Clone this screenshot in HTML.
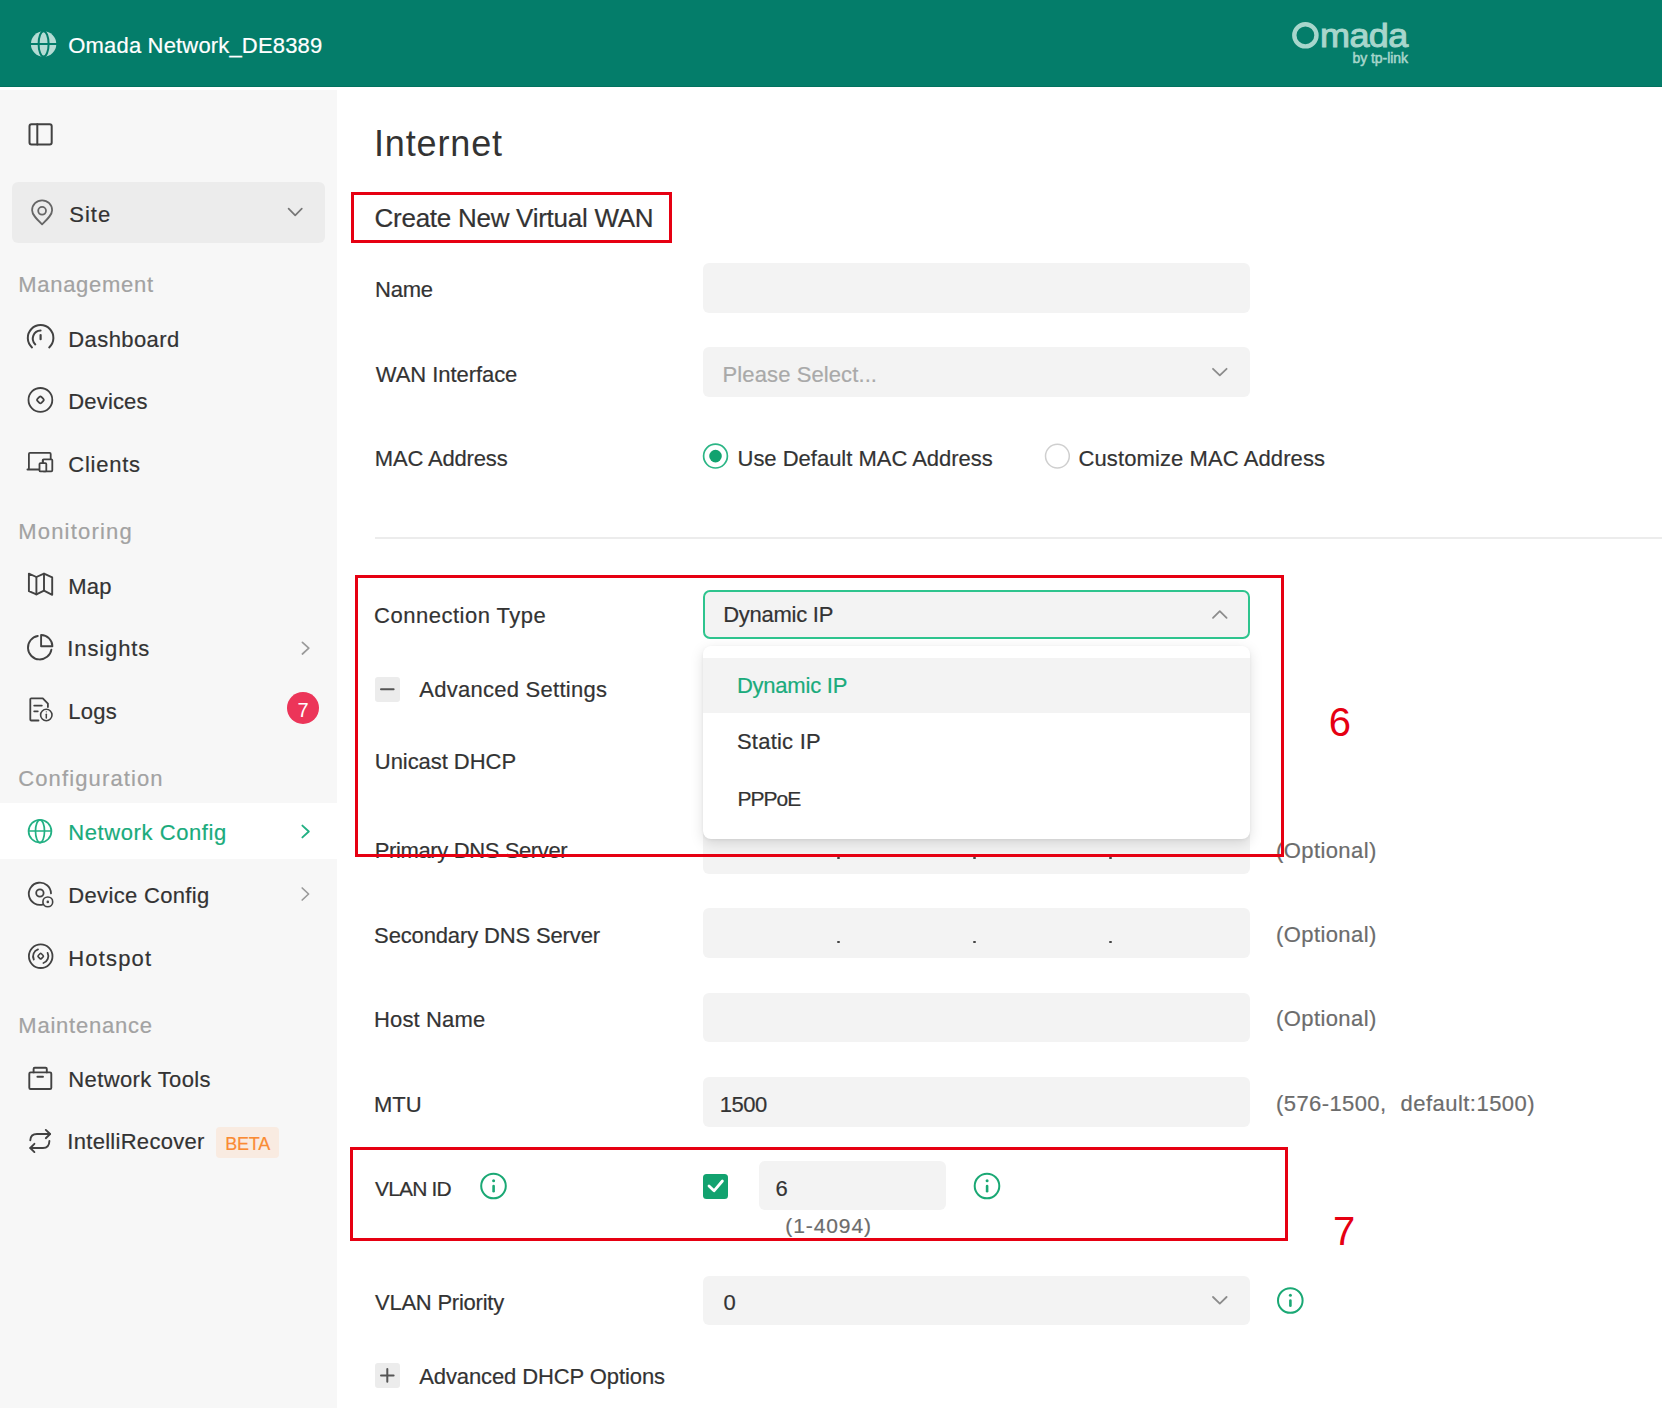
<!DOCTYPE html>
<html><head><meta charset="utf-8">
<style>
*{margin:0;padding:0;box-sizing:border-box}
html,body{width:1662px;height:1408px;overflow:hidden;background:#fff;font-family:"Liberation Sans",sans-serif}
.t{position:absolute;white-space:nowrap;line-height:1;-webkit-text-stroke:0.2px currentColor}
.b{position:absolute}
.ov{position:absolute;left:0;top:0;overflow:visible}
</style></head><body>


<div class="b" style="left:0;top:0;width:1662px;height:87px;background:#047d6a;border-bottom:1.6px solid #02725f"></div>
<div class="b" style="left:0;top:90px;width:337px;height:1318px;background:#f7f7f7"></div>
<div class="b" style="left:12px;top:181.5px;width:313px;height:61.5px;background:#ececec;border-radius:6px"></div>
<div class="b" style="left:287px;top:692px;width:31.8px;height:31.8px;border-radius:50%;background:#ec3559"></div>
<div class="b" style="left:0;top:803px;width:337px;height:56px;background:#fff"></div>
<div class="b" style="left:215.8px;top:1126.8px;width:63.5px;height:31.3px;background:#f9ebe1;border-radius:4px"></div>
<div class="b" style="left:703px;top:263px;width:546.5px;height:49.5px;background:#f3f3f3;border-radius:6px"></div>
<div class="b" style="left:703px;top:347px;width:546.5px;height:49.5px;background:#f3f3f3;border-radius:6px"></div>
<div class="b" style="left:375px;top:537px;width:1287px;height:2px;background:#ececec"></div>
<div class="b" style="left:703px;top:589.5px;width:546.5px;height:49.5px;background:#f3f3f3;border-radius:7px;border:2.2px solid #2ec48e"></div>
<div class="b" style="left:375px;top:677px;width:25px;height:24.5px;background:#ececec;border-radius:3px"></div>
<div class="b" style="left:703px;top:824px;width:546.5px;height:49.5px;background:#f3f3f3;border-radius:6px"></div>
<div class="b" style="left:703px;top:908.4px;width:546.5px;height:49.5px;background:#f3f3f3;border-radius:6px"></div>
<div class="b" style="left:703px;top:992.6px;width:546.5px;height:49.5px;background:#f3f3f3;border-radius:6px"></div>
<div class="b" style="left:703px;top:1077.2px;width:546.5px;height:49.5px;background:#f3f3f3;border-radius:6px"></div>
<div class="b" style="left:759.3px;top:1160.8px;width:187px;height:49.5px;background:#f3f3f3;border-radius:6px"></div>
<div class="b" style="left:703px;top:1275.5px;width:546.5px;height:49.5px;background:#f3f3f3;border-radius:6px"></div>
<div class="b" style="left:375px;top:1363.4px;width:25px;height:24.5px;background:#ececec;border-radius:3px"></div>
<div class="b" style="left:702.7px;top:1173.6px;width:25.3px;height:25.2px;background:#12a26f;border-radius:3.5px"></div>

<div class="b" style="left:837px;top:940.5px;width:2.5px;height:2.5px;background:#444;border-radius:50%"></div><div class="b" style="left:973px;top:940.5px;width:2.5px;height:2.5px;background:#444;border-radius:50%"></div><div class="b" style="left:1109px;top:940.5px;width:2.5px;height:2.5px;background:#444;border-radius:50%"></div><div class="b" style="left:837px;top:856.5px;width:2.5px;height:2.5px;background:#444;border-radius:50%"></div><div class="b" style="left:973px;top:856.5px;width:2.5px;height:2.5px;background:#444;border-radius:50%"></div><div class="b" style="left:1109px;top:856.5px;width:2.5px;height:2.5px;background:#444;border-radius:50%"></div>
<div class="t" style="left:68.3px;top:35.3px;font-size:22px;letter-spacing:0.17px;color:#fff">Omada Network_DE8389</div>
<div class="t" style="left:69.2px;top:203.9px;font-size:22px;letter-spacing:1.04px;color:#333333">Site</div>
<div class="t" style="left:18.2px;top:274.4px;font-size:22px;letter-spacing:0.72px;color:#a2a2a2">Management</div>
<div class="t" style="left:68.3px;top:329.0px;font-size:22px;letter-spacing:0.41px;color:#333333">Dashboard</div>
<div class="t" style="left:68.3px;top:391.3px;font-size:22px;letter-spacing:0.16px;color:#333333">Devices</div>
<div class="t" style="left:68.3px;top:454.0px;font-size:22px;letter-spacing:0.74px;color:#333333">Clients</div>
<div class="t" style="left:18.2px;top:521.0px;font-size:22px;letter-spacing:1.20px;color:#a2a2a2">Monitoring</div>
<div class="t" style="left:68.3px;top:576.1px;font-size:22px;letter-spacing:0.22px;color:#333333">Map</div>
<div class="t" style="left:67.3px;top:638.4px;font-size:22px;letter-spacing:0.88px;color:#333333">Insights</div>
<div class="t" style="left:68.3px;top:700.8px;font-size:22px;letter-spacing:0.26px;color:#333333">Logs</div>
<div class="t" style="left:18.2px;top:768.0px;font-size:22px;letter-spacing:1.13px;color:#a2a2a2">Configuration</div>
<div class="t" style="left:68.3px;top:822.4px;font-size:22px;letter-spacing:0.58px;color:#1aab7c">Network Config</div>
<div class="t" style="left:68.3px;top:885.2px;font-size:22px;letter-spacing:0.33px;color:#333333">Device Config</div>
<div class="t" style="left:68.3px;top:947.7px;font-size:22px;letter-spacing:1.17px;color:#333333">Hotspot</div>
<div class="t" style="left:18.3px;top:1015.2px;font-size:22px;letter-spacing:0.78px;color:#a2a2a2">Maintenance</div>
<div class="t" style="left:68.3px;top:1069.3px;font-size:22px;letter-spacing:0.38px;color:#333333">Network Tools</div>
<div class="t" style="left:67.3px;top:1130.6px;font-size:22px;letter-spacing:0.29px;color:#333333">IntelliRecover</div>
<div class="t" style="left:225.2px;top:1134.8px;font-size:18px;letter-spacing:-0.19px;color:#fa8b34">BETA</div>
<div class="t" style="left:297.5px;top:700.1px;font-size:20px;letter-spacing:0.00px;color:#fff;-webkit-text-stroke:0">7</div>
<div class="t" style="left:374.0px;top:126.4px;font-size:36px;letter-spacing:0.85px;color:#333333;-webkit-text-stroke:0">Internet</div>
<div class="t" style="left:374.6px;top:204.6px;font-size:26px;letter-spacing:-0.27px;color:#333333">Create New Virtual WAN</div>
<div class="t" style="left:375.0px;top:278.9px;font-size:22px;letter-spacing:-0.22px;color:#333333">Name</div>
<div class="t" style="left:375.8px;top:363.6px;font-size:22px;letter-spacing:-0.06px;color:#333333">WAN Interface</div>
<div class="t" style="left:722.6px;top:363.6px;font-size:22px;letter-spacing:0.10px;color:#a9a9a9">Please Select...</div>
<div class="t" style="left:374.8px;top:447.6px;font-size:22px;letter-spacing:-0.16px;color:#333333">MAC Address</div>
<div class="t" style="left:737.5px;top:447.6px;font-size:22px;letter-spacing:-0.01px;color:#333333">Use Default MAC Address</div>
<div class="t" style="left:1078.5px;top:447.6px;font-size:22px;letter-spacing:0.10px;color:#333333">Customize MAC Address</div>
<div class="t" style="left:374.1px;top:604.8px;font-size:22px;letter-spacing:0.50px;color:#333333">Connection Type</div>
<div class="t" style="left:723.2px;top:603.9px;font-size:22px;letter-spacing:-0.26px;color:#333333">Dynamic IP</div>
<div class="t" style="left:419.2px;top:679.2px;font-size:22px;letter-spacing:0.27px;color:#333333">Advanced Settings</div>
<div class="t" style="left:374.8px;top:751.0px;font-size:22px;letter-spacing:-0.05px;color:#333333">Unicast DHCP</div>
<div class="t" style="left:374.8px;top:839.6px;font-size:22px;letter-spacing:-0.38px;color:#333333">Primary DNS Server</div>
<div class="t" style="left:1276.0px;top:839.7px;font-size:22px;letter-spacing:0.41px;color:#6c6c6c">(Optional)</div>
<div class="t" style="left:374.1px;top:924.8px;font-size:22px;letter-spacing:-0.14px;color:#333333">Secondary DNS Server</div>
<div class="t" style="left:1276.0px;top:923.9px;font-size:22px;letter-spacing:0.41px;color:#6c6c6c">(Optional)</div>
<div class="t" style="left:374.0px;top:1008.8px;font-size:22px;letter-spacing:0.14px;color:#333333">Host Name</div>
<div class="t" style="left:1276.0px;top:1008.0px;font-size:22px;letter-spacing:0.41px;color:#6c6c6c">(Optional)</div>
<div class="t" style="left:374.0px;top:1094.1px;font-size:22px;letter-spacing:0.02px;color:#333333">MTU</div>
<div class="t" style="left:719.8px;top:1094.1px;font-size:22px;letter-spacing:-0.50px;color:#333333">1500</div>
<div class="t" style="left:1276.0px;top:1093.3px;font-size:22px;letter-spacing:0.41px;color:#6c6c6c">(576-1500,</div>
<div class="t" style="left:1400.6px;top:1093.3px;font-size:22px;letter-spacing:0.46px;color:#6c6c6c">default:1500)</div>
<div class="t" style="left:375.0px;top:1177.6px;font-size:21px;letter-spacing:-0.82px;color:#333333">VLAN ID</div>
<div class="t" style="left:775.6px;top:1177.7px;font-size:22px;letter-spacing:0.00px;color:#333333">6</div>
<div class="t" style="left:785.3px;top:1215.0px;font-size:21px;letter-spacing:0.90px;color:#6c6c6c">(1-4094)</div>
<div class="t" style="left:375.0px;top:1291.7px;font-size:22px;letter-spacing:-0.24px;color:#333333">VLAN Priority</div>
<div class="t" style="left:723.6px;top:1291.7px;font-size:22px;letter-spacing:0.00px;color:#333333">0</div>
<div class="t" style="left:419.2px;top:1366.3px;font-size:22px;letter-spacing:-0.10px;color:#333333">Advanced DHCP Options</div>
<svg class="ov" width="1662" height="1408" viewBox="0 0 1662 1408" >
<g fill="none" stroke-linecap="round" stroke-linejoin="round">
 <!-- header globe -->
 <circle cx="43.6" cy="43.9" r="12.7" fill="#b4dcd4" stroke="none"/>
 <ellipse cx="43.6" cy="43.9" rx="5" ry="12.7" stroke="#037d6a" stroke-width="2"/>
 <line x1="30.5" y1="43.9" x2="56.7" y2="43.9" stroke="#037d6a" stroke-width="2"/>
 <!-- omada O -->
 <circle cx="1305.4" cy="35.3" r="11.1" stroke="#a8d6cc" stroke-width="4.4"/>
 <!-- collapse -->
 <rect x="29.5" y="124.2" width="22.2" height="20.2" rx="2" stroke="#424242" stroke-width="2"/>
 <line x1="37.3" y1="124.2" x2="37.3" y2="144.4" stroke="#424242" stroke-width="2"/>
 <!-- site pin -->
 <path d="M42.1 224.3 C36 218.5 32.1 214.6 32.1 210.3 A10 10 0 0 1 52.1 210.3 C52.1 214.6 48.2 218.5 42.1 224.3 Z" stroke="#666" stroke-width="1.8"/>
 <circle cx="42.1" cy="210.8" r="3.9" stroke="#666" stroke-width="1.8"/>
 <polyline points="288.6,208.6 295.2,215.3 301.8,208.6" stroke="#777" stroke-width="1.7"/>
 <!-- dashboard -->
 <path d="M32 347.4 A12.8 12.8 0 1 1 49.2 347.4" stroke="#424242" stroke-width="2"/>
 <path d="M35.3 344.4 A8 8 0 0 1 40.6 330.6" stroke="#424242" stroke-width="2"/>
 <line x1="40.6" y1="335" x2="40.6" y2="339.2" stroke="#424242" stroke-width="2.2"/>
 <!-- devices -->
 <circle cx="40.4" cy="399.9" r="11.9" stroke="#424242" stroke-width="1.8"/>
 <rect x="37.6" y="397.1" width="5.6" height="5.6" rx="1.4" transform="rotate(45 40.4 399.9)" stroke="#424242" stroke-width="1.8"/>
 <!-- clients -->
 <path d="M28.9 468.6 V454 Q28.9 452.9 30 452.9 H49.6 Q50.7 452.9 50.7 454 V459" stroke="#424242" stroke-width="1.8"/>
 <line x1="27.5" y1="469.6" x2="39.2" y2="469.6" stroke="#424242" stroke-width="2"/>
 <rect x="42.7" y="459.3" width="9.6" height="12" rx="1" stroke="#424242" stroke-width="1.8"/>
 <rect x="39.5" y="463.1" width="6.8" height="8.3" rx="1" stroke="#424242" stroke-width="1.8" fill="#f7f7f7"/>
 <line x1="43" y1="460" x2="43" y2="463" stroke="#424242" stroke-width="1.6"/>
 <!-- map -->
 <path d="M28.9 573.6 L36.4 577 L44 573.6 L52.2 577.4 V594.8 L44 590.6 L36.4 594.4 L28.9 591.2 Z" stroke="#424242" stroke-width="1.9"/>
 <line x1="36.4" y1="577" x2="36.4" y2="594.4" stroke="#424242" stroke-width="1.9"/>
 <line x1="44" y1="573.6" x2="44" y2="590.6" stroke="#424242" stroke-width="1.9"/>
 <!-- insights -->
 <path d="M37.8 636 A11.8 11.8 0 1 0 51.4 649.6" stroke="#424242" stroke-width="1.9"/>
 <path d="M41.1 635 V646.3 H52.4 A11.3 11.3 0 0 0 41.1 635 Z" stroke="#424242" stroke-width="1.9"/>
 <!-- logs -->
 <path d="M38.5 720.5 H31.3 Q30.3 720.5 30.3 719.5 V699.3 Q30.3 698.3 31.3 698.3 H42.8 L47.9 703.6 V707" stroke="#424242" stroke-width="1.8"/>
 <line x1="34.2" y1="705.6" x2="41.8" y2="705.6" stroke="#424242" stroke-width="1.8"/>
 <line x1="34.2" y1="711.3" x2="37.8" y2="711.3" stroke="#424242" stroke-width="1.8"/>
 <circle cx="46.3" cy="715" r="5.7" stroke="#424242" stroke-width="1.6"/>
 <line x1="46.3" y1="714.2" x2="46.3" y2="718" stroke="#424242" stroke-width="1.5"/>
 <circle cx="46.3" cy="711.8" r="0.6" fill="#424242" stroke="none"/>
 <!-- network config globe -->
 <circle cx="40" cy="831.2" r="11.4" stroke="#22b083" stroke-width="1.7"/>
 <ellipse cx="40" cy="831.2" rx="4.5" ry="11.4" stroke="#22b083" stroke-width="1.7"/>
 <line x1="28.7" y1="831" x2="51.3" y2="831" stroke="#22b083" stroke-width="1.7"/>
 <!-- device config -->
 <path d="M43.4 904.3 A11.1 11.1 0 1 1 51 893.4" stroke="#424242" stroke-width="1.8"/>
 <circle cx="39.9" cy="893" r="3.7" stroke="#424242" stroke-width="1.8"/>
 <circle cx="47.8" cy="901.9" r="4.9" stroke="#424242" stroke-width="1.6"/>
 <circle cx="47.8" cy="901.9" r="1.3" fill="#424242" stroke="none"/>
 <!-- hotspot -->
 <circle cx="40.7" cy="956.2" r="11.8" stroke="#424242" stroke-width="1.8"/>
 <path d="M33.8 959.5 A7.3 7.3 0 0 1 38 949.4" stroke="#424242" stroke-width="1.8"/>
 <path d="M47.6 952.9 A7.3 7.3 0 0 1 43.4 963" stroke="#424242" stroke-width="1.8"/>
 <rect x="38.5" y="954" width="4.4" height="4.4" rx="1" transform="rotate(45 40.7 956.2)" stroke="#424242" stroke-width="1.6"/>
 <!-- network tools -->
 <rect x="29.3" y="1072.4" width="22" height="16.6" rx="1.3" stroke="#424242" stroke-width="1.9"/>
 <path d="M33.6 1072.4 V1069 Q33.6 1067.8 34.8 1067.8 H45.6 Q46.8 1067.8 46.8 1069 V1072.4" stroke="#424242" stroke-width="1.9"/>
 <line x1="37.4" y1="1076.8" x2="43" y2="1076.8" stroke="#424242" stroke-width="1.9"/>
 <!-- intellirecover -->
 <path d="M30.3 1140.3 Q30.6 1134 37 1134 H50" stroke="#424242" stroke-width="1.9"/>
 <polyline points="45.8,1129.9 50.1,1134 45.8,1138.2" stroke="#424242" stroke-width="1.9"/>
 <path d="M49.4 1141 Q49.2 1148 43 1148 H30.4" stroke="#424242" stroke-width="1.9"/>
 <polyline points="34.4,1143.8 30.3,1148 34.4,1152.1" stroke="#424242" stroke-width="1.9"/>
 <!-- sidebar chevrons -->
 <polyline points="302.4,642.4 308.8,648.2 302.4,654" stroke="#9a9a9a" stroke-width="1.7"/>
 <polyline points="302.4,825.6 308.8,831.5 302.4,837.4" stroke="#22b083" stroke-width="1.9"/>
 <polyline points="302.2,888 308.6,894 302.2,900" stroke="#9a9a9a" stroke-width="1.7"/>
 <!-- select chevrons -->
 <polyline points="1213,368.8 1219.8,375.4 1226.6,368.8" stroke="#8c8c8c" stroke-width="1.8"/>
 <polyline points="1213,617.8 1219.8,611.2 1226.6,617.8" stroke="#8c8c8c" stroke-width="1.8"/>
 <polyline points="1213,1297 1219.8,1303.6 1226.6,1297" stroke="#8c8c8c" stroke-width="1.8"/>
 <!-- radios -->
 <circle cx="715.5" cy="456.1" r="11.9" stroke="#2bb585" stroke-width="1.7"/>
 <circle cx="715.5" cy="456.1" r="6.3" fill="#12a26f" stroke="none"/>
 <circle cx="1057.4" cy="456.1" r="11.9" stroke="#cfcfcf" stroke-width="1.5"/>
 <!-- minus / plus -->
 <line x1="381" y1="689.2" x2="393.6" y2="689.2" stroke="#555" stroke-width="2"/>
 <line x1="381" y1="1375.4" x2="393.6" y2="1375.4" stroke="#555" stroke-width="2"/>
 <line x1="387.3" y1="1369" x2="387.3" y2="1381.8" stroke="#555" stroke-width="2"/>
 <!-- checkbox check -->
 <polyline points="709,1186 714,1190.8 722.4,1181" stroke="#fff" stroke-width="2.8"/>
 <!-- info icons -->
 <g stroke="#1aa874">
  <circle cx="493.5" cy="1186" r="12.3" stroke-width="2"/>
  <line x1="493.6" y1="1186" x2="493.6" y2="1191.2" stroke-width="2.6"/>
  <circle cx="987" cy="1186" r="12.3" stroke-width="2"/>
  <line x1="987.1" y1="1186" x2="987.1" y2="1191.2" stroke-width="2.6"/>
  <circle cx="1290.3" cy="1300.5" r="12.3" stroke-width="2"/>
  <line x1="1290.4" y1="1300.5" x2="1290.4" y2="1305.7" stroke-width="2.6"/>
 </g>
 <g fill="#1aa874" stroke="none">
  <circle cx="493.6" cy="1180.8" r="1.5"/>
  <circle cx="987.1" cy="1180.8" r="1.5"/>
  <circle cx="1290.4" cy="1295.3" r="1.5"/>
 </g>
</g></svg>

<div class="b" style="left:703px;top:645.6px;width:546.5px;height:193.3px;background:#fff;border-radius:8px;box-shadow:0 4px 14px rgba(0,0,0,.13),0 1px 3px rgba(0,0,0,.06)"></div>
<div class="b" style="left:703px;top:657.8px;width:546.5px;height:55.6px;background:#f3f3f3"></div>

<div class="t" style="left:736.9px;top:675.3px;font-size:22px;letter-spacing:-0.22px;color:#1aab7c">Dynamic IP</div>
<div class="t" style="left:736.9px;top:731.3px;font-size:22px;letter-spacing:0.24px;color:#333333">Static IP</div>
<div class="t" style="left:737.4px;top:788.0px;font-size:21px;letter-spacing:-0.95px;color:#333333">PPPoE</div>

<div class="b" style="left:351px;top:192px;width:321px;height:51px;border:3px solid #e60012"></div>
<div class="b" style="left:355px;top:575px;width:929px;height:282px;border:3px solid #e60012"></div>
<div class="b" style="left:350px;top:1147px;width:938px;height:94px;border:3px solid #e60012"></div>

<div class="t" style="left:1328.7px;top:702.1px;font-size:40px;letter-spacing:0.00px;color:#e60012;-webkit-text-stroke:0">6</div>
<div class="t" style="left:1332.9px;top:1210.6px;font-size:40px;letter-spacing:0.00px;color:#e60012;-webkit-text-stroke:0">7</div>
<div class="t" style="left:1320px;top:17.2px;font-size:36px;letter-spacing:-0.6px;color:#a8d6cc;-webkit-text-stroke:1.1px #a8d6cc;transform:scaleY(0.94);transform-origin:0 29px">mada</div>
<div class="t" style="left:1352.5px;top:50.5px;font-size:14px;letter-spacing:-0.05px;color:#a8d6cc;-webkit-text-stroke:0.5px #a8d6cc">by tp-link</div>
</body></html>
